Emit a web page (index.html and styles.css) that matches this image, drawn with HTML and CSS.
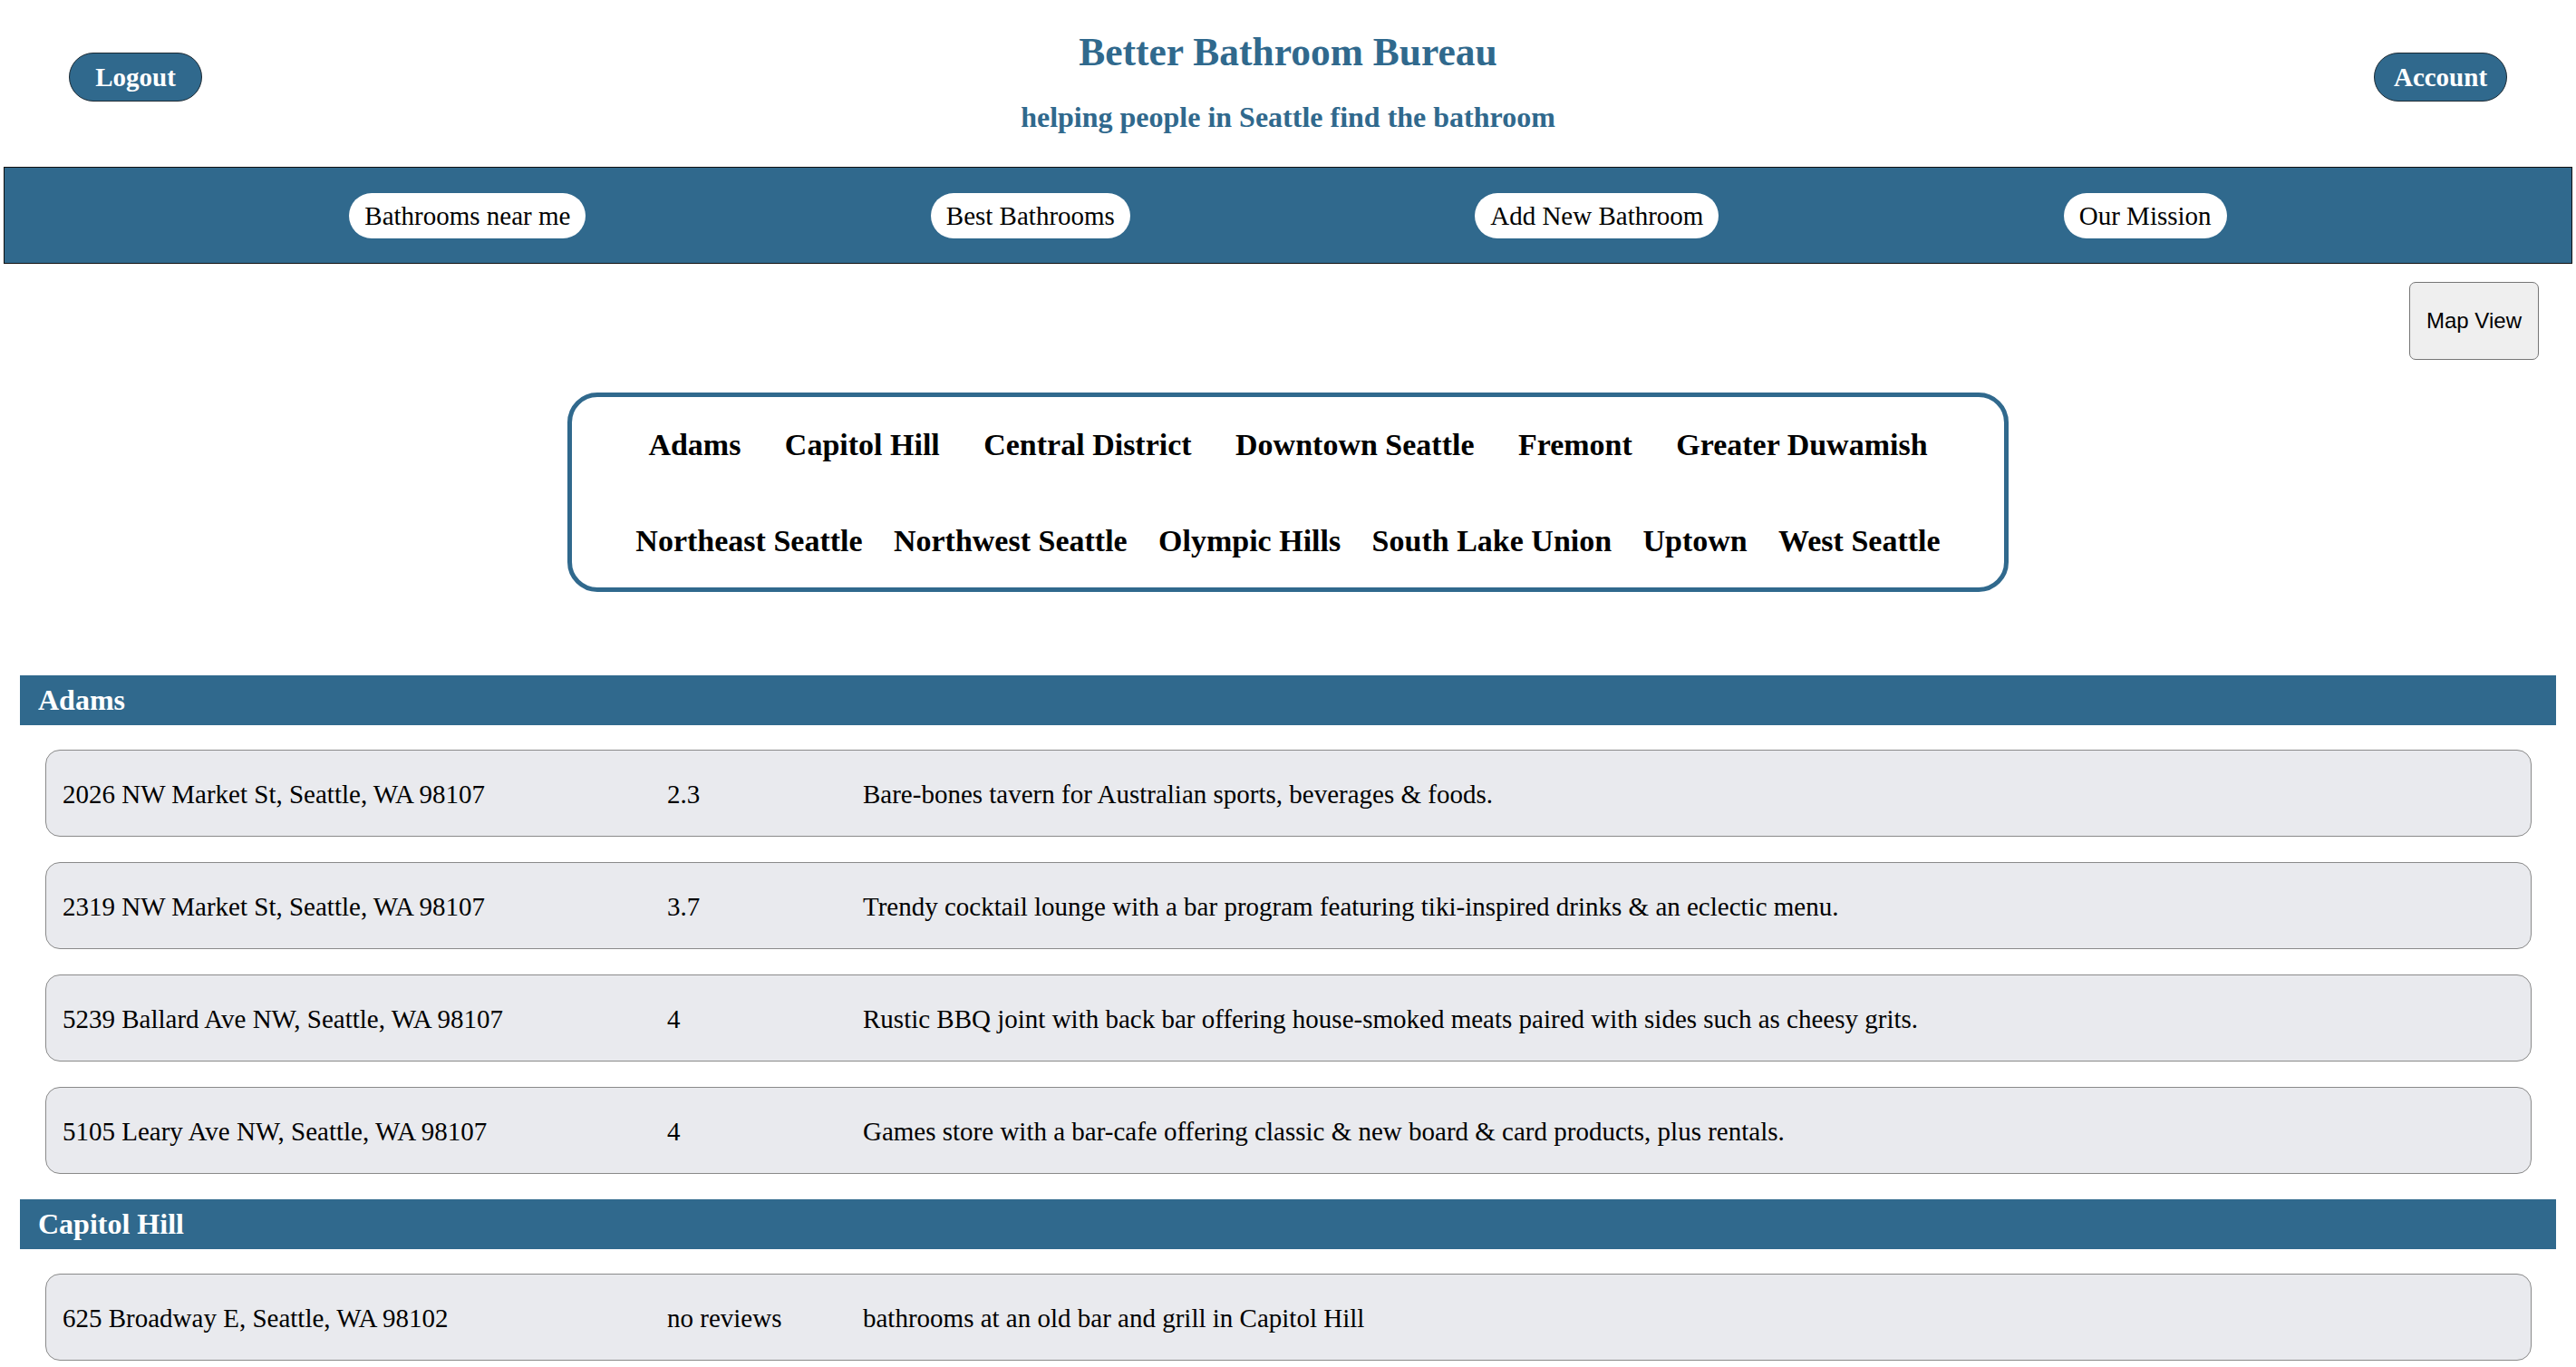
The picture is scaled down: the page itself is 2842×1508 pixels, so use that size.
FILE: index.html
```html
<!DOCTYPE html>
<html lang="en">
<head>
<meta charset="utf-8">
<title>Better Bathroom Bureau</title>
<link rel="stylesheet" href="styles.css">
</head>
<body>
<header class="top">
  <div class="top-left"><button class="hdr-btn">Logout</button></div>
  <div class="brand">
    <h1 class="brand-title">Better Bathroom Bureau</h1>
    <p class="brand-sub">helping people in Seattle find the bathroom</p>
  </div>
  <div class="top-right"><button class="hdr-btn">Account</button></div>
</header>

<nav class="mainnav">
  <button class="pill">Bathrooms near me</button>
  <button class="pill">Best Bathrooms</button>
  <button class="pill">Add New Bathroom</button>
  <button class="pill">Our Mission</button>
</nav>

<div class="map-row"><button class="map-btn">Map View</button></div>

<div class="hoods">
  <a href="#adams">Adams</a>
  <a href="#capitol">Capitol Hill</a>
  <a href="#">Central District</a>
  <a href="#">Downtown Seattle</a>
  <a href="#">Fremont</a>
  <a href="#">Greater Duwamish</a>
  <a href="#">Northeast Seattle</a>
  <a href="#">Northwest Seattle</a>
  <a href="#">Olympic Hills</a>
  <a href="#">South Lake Union</a>
  <a href="#">Uptown</a>
  <a href="#">West Seattle</a>
</div>

<main class="areas">
  <section class="area" id="adams">
    <h2 class="area-title">Adams</h2>
    <div class="cards">
      <div class="card"><span>2026 NW Market St, Seattle, WA 98107</span><span>2.3</span><span>Bare-bones tavern for Australian sports, beverages &amp; foods.</span></div>
      <div class="card"><span>2319 NW Market St, Seattle, WA 98107</span><span>3.7</span><span>Trendy cocktail lounge with a bar program featuring tiki-inspired drinks &amp; an eclectic menu.</span></div>
      <div class="card"><span>5239 Ballard Ave NW, Seattle, WA 98107</span><span>4</span><span>Rustic BBQ joint with back bar offering house-smoked meats paired with sides such as cheesy grits.</span></div>
      <div class="card"><span>5105 Leary Ave NW, Seattle, WA 98107</span><span>4</span><span>Games store with a bar-cafe offering classic &amp; new board &amp; card products, plus rentals.</span></div>
    </div>
  </section>
  <section class="area" id="capitol">
    <h2 class="area-title">Capitol Hill</h2>
    <div class="cards">
      <div class="card"><span>625 Broadway E, Seattle, WA 98102</span><span>no reviews</span><span>bathrooms at an old bar and grill in Capitol Hill</span></div>
    </div>
  </section>
</main>
</body>
</html>
```
FILE: styles.css
```css
* { box-sizing: border-box; }

body {
  margin: 0;
  font-family: "Liberation Serif", "Times New Roman", serif;
  font-size: 29px;
  color: #000;
  background: #fff;
}

.top {
  display: grid;
  grid-template-columns: 1fr auto 1fr;
  align-items: start;
  padding: 32px 76px 0;
}
.top-right { display: flex; justify-content: flex-end; }

.hdr-btn {
  width: 147px;
  height: 54px;
  margin-top: 26px;
  padding: 0;
  background: #30698d;
  color: #fff;
  border: 1px solid #1d2a33;
  border-radius: 27px;
  font-family: "Liberation Serif", "Times New Roman", serif;
  font-weight: bold;
  font-size: 29px;
  line-height: 52px;
}

.brand { text-align: center; color: #30698d; }
.brand-title {
  margin: 0;
  font-size: 43.5px;
  line-height: 50px;
  font-weight: bold;
}
.brand-sub {
  margin: 29px 0 0;
  font-size: 32px;
  line-height: 37px;
  font-weight: bold;
}

.mainnav {
  margin: 36px 4px 0;
  height: 107px;
  background: #30698d;
  border: 1px solid #111;
  display: flex;
  justify-content: space-evenly;
  align-items: center;
}
.pill {
  height: 50px;
  padding: 0 17px;
  background: #fff;
  color: #000;
  border: 0;
  border-radius: 25px;
  font-family: "Liberation Serif", "Times New Roman", serif;
  font-size: 29px;
  line-height: 50px;
}

.map-row {
  display: flex;
  justify-content: flex-end;
  padding: 20px 41px 0 0;
}
.map-btn {
  width: 143px;
  height: 86px;
  padding: 0;
  background: #efefef;
  color: #000;
  border: 1px solid #767676;
  border-radius: 7px;
  font-family: "Liberation Sans", Arial, sans-serif;
  font-size: 24px;
}

.hoods {
  width: 1590px;
  margin: 36px auto 0;
  border: 5px solid #30698d;
  border-radius: 33px;
  padding: 33px 66px 32px;
  display: flex;
  flex-wrap: wrap;
  justify-content: space-evenly;
  column-gap: 30px;
  row-gap: 67px;
}
.hoods a {
  font-weight: bold;
  font-size: 34px;
  line-height: 39px;
  color: #000;
  text-decoration: none;
}

.areas { margin-top: 92px; }
.area { margin: 0 22px; }
.area-title {
  margin: 0;
  height: 55px;
  padding-left: 20px;
  background: #30698d;
  color: #fff;
  font-size: 32px;
  line-height: 55px;
  font-weight: bold;
}
.cards {
  display: flex;
  flex-direction: column;
  gap: 28px;
  padding: 27px 27px 28px 28px;
}
.card {
  display: grid;
  grid-template-columns: 667px 216px 1fr;
  padding: 32px 18px 29px;
  line-height: 33px;
  background: #e9eaee;
  border: 1px solid #8a8a8a;
  border-radius: 16px;
}
```
